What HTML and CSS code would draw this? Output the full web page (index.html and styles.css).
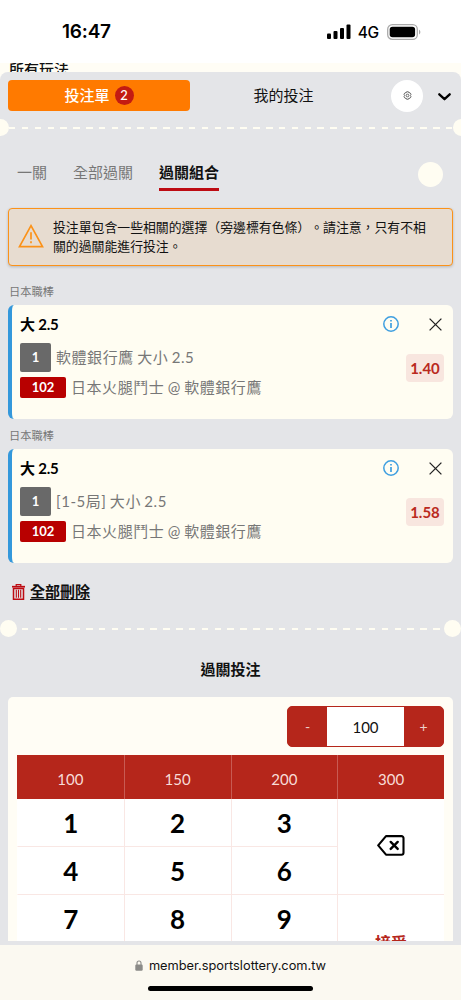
FILE: index.html
```html
<!DOCTYPE html>
<html lang="zh-Hant">
<head>
    <meta charset="UTF-8">
    <meta name="viewport" content="width=device-width, initial-scale=1.0">
    <title>投注單</title>
    <link rel="stylesheet" href="styles.css">
</head>
<body>

    <div class="status-bar">
        <span class="time">16:47</span>
        <div class="status-right">
            <svg class="signal" viewBox="0 0 24 16">
                <rect x="0" y="9.5" width="4" height="5.5" rx="1"/>
                <rect x="6.5" y="7" width="4" height="8" rx="1"/>
                <rect x="13" y="4" width="4" height="11" rx="1"/>
                <rect x="19.5" y="0.5" width="4" height="14.5" rx="1"/>
            </svg>
            <span class="network">4G</span>
            <svg class="battery" viewBox="0 0 34 16">
                <rect x="0.7" y="0.7" width="29.6" height="14.6" rx="4.6" fill="none" stroke="#aaa" stroke-width="1.3"/>
                <rect x="2.7" y="2.7" width="25.4" height="10.6" rx="2.8"/>
                <path d="M32 5.8c1.8.7 1.8 3.9 0 4.6z" fill="#aaa"/>
            </svg>
        </div>
    </div>

    <div class="page-behind">所有玩法</div>

    <main class="betslip">
        <div class="top-tabs">
            <button class="tab-main">投注單 <span class="count">2</span></button>
            <button class="tab-mine">我的投注</button>
            <button class="settings">
                <svg viewBox="0 0 24 24" fill="none" stroke="#444" stroke-width="2">
                    <path d="M9.5 2h5l1 3 3-.5 3 4-1.8 3.5 1.8 3.5-3 4-3-.5-1 3h-5l-1-3-3 .5-3-4 1.8-3.500-1.8-3.500 3-4 3 .5z" stroke-linejoin="round"/>
                    <circle cx="12" cy="12" r="3.6"/>
                </svg>
            </button>
            <button class="collapse">
                <svg viewBox="0 0 13 8"><path d="M1.3 1.3l5.2 4.9 5.2-4.900" fill="none" stroke="#000" stroke-width="2.3" stroke-linecap="round" stroke-linejoin="round"/></svg>
            </button>
        </div>

        <div class="divider edge"></div>

        <nav class="bet-types">
            <span>一關</span>
            <span>全部過關</span>
            <span class="active">過關組合</span>
            <i class="dot"></i>
        </nav>

        <div class="alert">
            <svg viewBox="0 0 26 24" fill="none" stroke="#fb9219" stroke-width="1.7">
                <path d="M13 1.7L24.5 22.6H1.5z"/>
                <path d="M13 8.2v7.300M13 17.3v2"/>
            </svg>
            <p>投注單包含一些相關的選擇（旁邊標有色條）。請注意，只有不相<br>關的過關能進行投注。</p>
        </div>

        <div class="league">日本職棒</div>
        <div class="bet-card">
            <div class="bet-head">
                <b>大 2.5</b>
                <svg class="info" viewBox="0 0 16 16" fill="none" stroke="#3f9fe0" stroke-width="1.5"><circle cx="8" cy="8" r="7.2"/><path d="M8 7v5M8 4v1.5" stroke-width="1.7"/></svg>
                <svg class="close" viewBox="0 0 13 13"><path d="M.6.6l11.8 11.800M12.400.6L.6 12.4" stroke="#222" stroke-width="1.3"/></svg>
            </div>
            <div class="bet-body">
                <div class="bet-lines">
                    <div class="line market"><span class="tag gray">1</span><span class="text">軟體銀行鷹 大小 2.5</span></div>
                    <div class="line match"><span class="tag red">102</span><span class="text">日本火腿鬥士 @ 軟體銀行鷹</span></div>
                </div>
                <span class="odds">1.40</span>
            </div>
        </div>

        <div class="league second">日本職棒</div>
        <div class="bet-card">
            <div class="bet-head">
                <b>大 2.5</b>
                <svg class="info" viewBox="0 0 16 16" fill="none" stroke="#3f9fe0" stroke-width="1.5"><circle cx="8" cy="8" r="7.2"/><path d="M8 7v5M8 4v1.5" stroke-width="1.7"/></svg>
                <svg class="close" viewBox="0 0 13 13"><path d="M.6.6l11.8 11.800M12.400.6L.6 12.4" stroke="#222" stroke-width="1.3"/></svg>
            </div>
            <div class="bet-body">
                <div class="bet-lines">
                    <div class="line market"><span class="tag gray">1</span><span class="text">[1-5局] 大小 2.5</span></div>
                    <div class="line match"><span class="tag red">102</span><span class="text">日本火腿鬥士 @ 軟體銀行鷹</span></div>
                </div>
                <span class="odds">1.58</span>
            </div>
        </div>

        <div class="delete-all">
            <svg viewBox="0 0 13 16" fill="none" stroke="#bd0b12">
                <path d="M0 2.7h13" stroke-width="1.7"/>
                <path d="M4.2 2.5V.6h4.6v1.9" stroke-width="1.2"/>
                <path d="M1.5 4.5v10.7h10V4.5z" stroke-width="1.5"/>
                <path d="M4.3 5.8v8M6.5 5.8v8M8.7 5.8v8" stroke-width="1.1"/>
            </svg>
            <a>全部刪除</a>
        </div>

        <div class="divider"></div>

        <h2>過關投注</h2>

        <section class="keypad">
            <div class="stepper">
                <button>-</button>
                <span>100</span>
                <button>+</button>
            </div>
            <div class="amounts">
                <span>100</span><span>150</span><span>200</span><span>300</span>
            </div>
            <div class="keys">
                <span>1</span><span>2</span><span>3</span>
                <span class="backspace">
                    <svg viewBox="0 0 28 21" fill="none" stroke="#000" stroke-width="2.1" stroke-linejoin="round" stroke-linecap="round">
                        <path d="M9 1.1h15.5a2 2 0 0 1 2 2v14.6a2 2 0 0 1-2 2H9L1.2 10.4z"/>
                        <path d="M13.7 6.9l7 7M20.7 6.9l-7 7" stroke-width="2.4"/>
                    </svg>
                </span>
                <span>4</span><span>5</span><span>6</span>
                <span>7</span><span>8</span><span>9</span>
                <span class="accept">接受</span>
            </div>
        </section>
    </main>

    <footer class="browser-bar">
        <div class="address">
            <svg viewBox="0 0 8 11"><rect x=".3" y="4.5" width="7.4" height="6.2" rx="1.2" fill="#8b8b88"/><path d="M2 5V3a2 2 0 0 1 4 0v2" fill="none" stroke="#8b8b88" stroke-width="1.1"/></svg>
            <span>member.sportslottery.com.tw</span>
        </div>
        <div class="home-indicator"></div>
    </footer>

</body>
</html>
```
FILE: styles.css
```css
* {
    margin: 0;
    padding: 0;
    box-sizing: border-box;
}

body {
    width: 461px;
    height: 1000px;
    display: flex;
    flex-direction: column;
    overflow: hidden;
    background: #fffdf5;
    color: #111;
    font-family: Lato, "Noto Sans CJK TC", sans-serif;
    font-size: 15px;
}

svg {
    display: block;
    flex: none;
}

button {
    border: none;
    background: none;
    color: inherit;
    font: inherit;
}

/* Status bar */
.status-bar {
    height: 63px;
    flex: none;
    display: flex;
    justify-content: space-between;
    padding: 20px 40px 0 62px;
    background: #fff;
    font-family: Inter, sans-serif;
    color: #000;
}

.time {
    font-size: 19px;
    font-weight: 600;
    line-height: 23px;
    letter-spacing: -0.2px;
}

.status-right {
    display: flex;
    align-items: center;
    height: 23px;
}

.signal {
    width: 24px;
    height: 16px;
}

.network {
    margin: 1px 8px 0 7px;
    font-size: 15.5px;
    font-weight: 500;
    letter-spacing: -0.2px;
}

.battery {
    width: 34px;
    height: 16px;
}

/* Page under the betslip */
.page-behind {
    height: 9px;
    flex: none;
    overflow: hidden;
    padding-left: 9px;
    line-height: 13px;
    font-weight: 500;
}

/* Betslip */
.betslip {
    height: 869px;
    flex: none;
    overflow: hidden;
    padding: 8px 8px 0;
    background: #e4e5e8;
    border-radius: 8px 8px 0 0;
}

.top-tabs {
    display: flex;
    align-items: center;
    height: 31px;
}

.tab-main {
    display: flex;
    align-items: center;
    justify-content: center;
    gap: 5px;
    width: 182px;
    height: 31px;
    border-radius: 4px;
    background: #ff7a00;
    color: #fff;
    font-weight: 500;
    line-height: 29px;
}

.count {
    width: 19px;
    height: 19px;
    border-radius: 50%;
    background: #c31b12;
    font-size: 13px;
    line-height: 19px;
    text-align: center;
}

.tab-mine {
    width: 187px;
    line-height: 29px;
}

.settings {
    display: flex;
    align-items: center;
    justify-content: center;
    width: 32px;
    height: 32px;
    margin-left: 14px;
    border-radius: 50%;
    background: #fff;
}

.settings svg {
    width: 9px;
    height: 9px;
}

.collapse {
    margin-left: 15px;
    padding-top: 2px;
}

.collapse svg {
    width: 13px;
    height: 8px;
}

/* Ticket tear line */
.divider {
    display: flex;
    align-items: center;
    justify-content: space-between;
    height: 17px;
    margin: 0 -8px;
    background: repeating-linear-gradient(90deg, #fffdf2 0 6.5px, transparent 6.5px 12.85px) 8.6px 8px / 444px 2px no-repeat;
}

.divider::before,
.divider::after {
    content: "";
    width: 17px;
    height: 17px;
    border-radius: 50%;
    background: #fffdf2;
}

.divider.edge {
    margin: 8px -16.5px 0;
    background-position: 17px 8px;
}

/* Bet types */
.bet-types {
    display: flex;
    align-items: flex-start;
    gap: 26px;
    height: 72px;
    padding: 25px 10px 0 9px;
    color: #777;
    line-height: 23px;
}

.bet-types .active {
    height: 30px;
    border-bottom: 3px solid #bd0b12;
    color: #111;
    font-weight: bold;
}

.dot {
    width: 25px;
    height: 25px;
    margin: 1px 0 0 auto;
    border-radius: 50%;
    background: #fffdf2;
}

/* Alert */
.alert {
    display: flex;
    align-items: center;
    height: 58px;
    padding-left: 9px;
    border: 1px solid #fb9219;
    border-radius: 4px;
    background: #e7dcd0;
    box-shadow: 0 1px 3px rgba(0, 0, 0, 0.2);
    font-size: 12.87px;
    line-height: 19px;
    text-spacing-trim: space-all;
}

.alert svg {
    width: 26px;
    height: 24px;
    margin: 0 9px 3px 0;
}

.alert p {
    white-space: nowrap;
}

/* Bets */
.league {
    height: 39px;
    padding: 17px 0 0 1px;
    color: #777;
    font-size: 11.25px;
    line-height: 18px;
}

.league.second {
    height: 30px;
    padding-top: 8px;
}

.bet-card {
    height: 114px;
    padding: 7px 9px 0 8px;
    border-left: 4px solid #3498db;
    border-radius: 6px;
    background: #fffdf2;
}

.bet-head {
    display: flex;
    align-items: center;
    height: 24px;
    color: #000;
}

.bet-head b {
    padding-bottom: 2px;
    letter-spacing: -0.2px;
}

.info {
    width: 16px;
    height: 16px;
    margin: 0 30px 0 auto;
}

.close {
    width: 13px;
    height: 13px;
    margin-right: 2px;
}

.bet-body {
    display: flex;
    justify-content: space-between;
    padding-top: 7px;
}

.line {
    display: flex;
    align-items: center;
    height: 29px;
    color: #777;
}

.line .text {
    padding-bottom: 2px;
    letter-spacing: 0.55px;
    word-spacing: -1px;
    white-space: nowrap;
}

.line.match {
    height: 30px;
}

.tag {
    border-radius: 2px;
    color: #fff;
    font-size: 13px;
    font-weight: bold;
    text-align: center;
}

.gray {
    width: 31px;
    margin-right: 5px;
    background: #696969;
    line-height: 29px;
}

.red {
    width: 46px;
    margin-right: 5px;
    background: #b80000;
    line-height: 21px;
}

.odds {
    width: 38px;
    height: 28px;
    margin-top: 11px;
    border-radius: 4px;
    background: #f8e6df;
    color: #ba2a1e;
    font-weight: bold;
    line-height: 28px;
    text-align: center;
}

.delete-all {
    display: flex;
    align-items: center;
    gap: 5px;
    height: 57px;
    padding-left: 4px;
    font-weight: bold;
}

.delete-all svg {
    width: 13px;
    height: 16px;
}

.delete-all a {
    padding-bottom: 2px;
    text-decoration: underline;
    text-decoration-thickness: 1px;
    text-underline-offset: 2px;
}

h2 {
    height: 60px;
    padding-top: 20px;
    font-size: 15px;
    line-height: 24px;
    text-align: center;
}

/* Keypad */
.keypad {
    padding: 9px;
    border-radius: 5px;
    background: #fffdf5;
}

.stepper {
    display: flex;
    width: 157px;
    height: 41px;
    margin: 0 0 8px auto;
    border: 1px solid #b5261b;
    border-radius: 5px;
    overflow: hidden;
    background: #b5261b;
    line-height: 40px;
    text-align: center;
}

.stepper button {
    width: 39px;
    color: #eed0cb;
    font-size: 14px;
}

.stepper span {
    flex: 1;
    background: #fff;
}

.amounts {
    display: grid;
    grid-template-columns: repeat(4, 1fr);
    grid-auto-rows: 44px;
    background: #b5261b;
    color: #f8dcd8;
    line-height: 48px;
    height: 44px;
    overflow: hidden;
    text-align: center;
}

.amounts span + span {
    border-left: 1px solid #c85b53;
}

.keys {
    display: grid;
    grid-template-columns: repeat(4, 1fr);
    grid-auto-rows: 48px;
    background: #fff;
    color: #000;
    font-size: 26px;
    font-weight: bold;
    line-height: 48px;
    text-align: center;
}

.keys span {
    border-left: 1px solid #f9e7e4;
    border-bottom: 1px solid #f9e7e4;
}

.keys span:nth-child(1),
.keys span:nth-child(5),
.keys span:nth-child(8) {
    border-left-color: transparent;
}

.keys .backspace,
.keys .accept {
    grid-column: 4;
    grid-row: span 2;
}

.backspace svg {
    width: 28px;
    height: 21px;
    margin: 36px auto 0;
}

.keys .accept {
    color: #b5261b;
    font-size: 16px;
    line-height: 96px;
}

/* Browser bar */
.browser-bar {
    height: 59px;
    flex: none;
    border-top: 4px solid #e4e5e8;
    background: #fbf9f1;
}

.address {
    display: flex;
    align-items: center;
    justify-content: center;
    gap: 6px;
    height: 41px;
    font-family: Inter, sans-serif;
    font-size: 12.8px;
}

.address svg {
    width: 8px;
    height: 11px;
}

.home-indicator {
    width: 165px;
    height: 5px;
    margin: 0 auto;
    border-radius: 3px;
    background: #000;
}
```
